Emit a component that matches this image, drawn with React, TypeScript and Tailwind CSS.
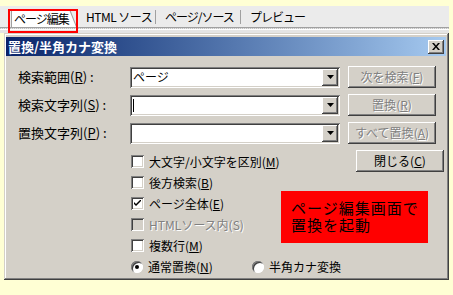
import React from 'react';

const raised =
  'shadow-[inset_-1px_-1px_0_#404040,inset_1px_1px_0_#ffffff,inset_-2px_-2px_0_#808080,inset_2px_2px_0_#d4d0c8]';
const sunken =
  'shadow-[inset_1px_1px_0_#808080,inset_-1px_-1px_0_#ffffff,inset_2px_2px_0_#404040,inset_-2px_-2px_0_#d4d0c8]';

const Accel: React.FC<{ pre: string; k: string; post?: string }> = ({ pre, k, post }) => (
  <>
    {pre}(<span className="underline underline-offset-[1px]">{k}</span>)
    {post && <span className="ml-[3px]">{post}</span>}
  </>
);

const Combo: React.FC<{ value?: string; caret?: boolean }> = ({ value, caret }) => (
  <div className={`relative flex h-[21px] w-[210px] items-center bg-white pl-[3px] ${sunken}`}>
    {caret && <div className="h-[13px] w-px bg-black" />}
    {value && <span className="text-[12px] leading-none">{value}</span>}
    <div
      className={`absolute right-[2px] top-[2px] flex h-[17px] w-[16px] items-center justify-center bg-[#d4d0c8] ${raised}`}
    >
      <svg width="7" height="4" viewBox="0 0 7 4">
        <path d="M0 0h7L3.5 4z" fill="#000" />
      </svg>
    </div>
  </div>
);

const Btn: React.FC<{ disabled?: boolean; children: React.ReactNode }> = ({ disabled, children }) => (
  <div
    className={`flex h-[22px] w-[88px] items-center justify-center bg-[#d4d0c8] text-[12px] ${raised} ${
      disabled ? 'text-[#808080] [text-shadow:1px_1px_0_#ffffff]' : 'text-black'
    }`}
  >
    {children}
  </div>
);

const Check: React.FC<{ checked?: boolean; disabled?: boolean; children: React.ReactNode }> = ({
  checked,
  disabled,
  children,
}) => (
  <div className="flex h-[21px] items-center">
    <div
      className={`flex h-[13px] w-[13px] items-center justify-center ${sunken} ${
        disabled ? 'bg-[#d4d0c8]' : 'bg-white'
      }`}
    >
      {checked && (
        <svg width="7" height="7" viewBox="0 0 7 7">
          <path d="M0 2l2 2 5-5v2l-5 5-2-2z" fill="#000" />
        </svg>
      )}
    </div>
    <span
      className={`ml-[5px] text-[12px] leading-none ${
        disabled ? 'text-[#808080] [text-shadow:1px_1px_0_#ffffff]' : 'text-black'
      }`}
    >
      {children}
    </span>
  </div>
);

const Radio: React.FC<{ checked?: boolean; children: React.ReactNode }> = ({ checked, children }) => (
  <div className="flex h-[21px] items-center">
    <div className="relative h-[12px] w-[12px] rounded-full bg-white shadow-[inset_1px_1px_0_#808080,inset_-1px_-1px_0_#ffffff,inset_2px_2px_0_#404040]">
      {checked && <div className="absolute left-[4px] top-[4px] h-[4px] w-[4px] rounded-full bg-black" />}
    </div>
    <span className="ml-[5px] text-[12px] leading-none text-black">{children}</span>
  </div>
);

export default function App() {
  return (
    <div className="relative h-[295px] w-[453px] overflow-hidden bg-[#ffffd4] font-['Noto_Sans_CJK_JP',sans-serif] text-black">
      <div className="h-[6px]" />
      {/* tab strip */}
      <div className="flex h-[22px] w-[449px] items-end border-b border-[#a0a0a0] bg-[#ebebeb] text-[12px]">
        <div className="ml-[11px] h-[17px] w-[66px] bg-[#a0a0a0] [clip-path:polygon(0_0,90%_0,100%_100%,0_100%)]">
          <div className="ml-px mt-px flex h-[16px] w-[64px] items-center bg-white pl-[2px] tracking-[-1px] [clip-path:polygon(0_0,90%_0,100%_100%,0_100%)]">
            ページ編集
          </div>
        </div>
        <div className="flex h-full items-center">
          <span className="ml-[9px] w-[62px] whitespace-nowrap tracking-[-0.5px]">HTML ソース</span>
          <div className="ml-[7px] h-[14px] w-px bg-[#a0a0a0]" />
          <span className="ml-[9px] w-[66px] whitespace-nowrap tracking-[-1px]">ページ/ソース</span>
          <div className="ml-[9px] h-[14px] w-px bg-[#a0a0a0]" />
          <span className="ml-[9px] whitespace-nowrap tracking-[-1px]">プレビュー</span>
        </div>
      </div>
      <div className="h-[5px] w-[449px] border-t border-dotted border-[#c0c0c0] bg-[#e4e4e4] shadow-[inset_0_1px_0_#ffffff]" />

      {/* dialog */}
      <div className="ml-[4px] h-[247px] w-[445px] bg-[#d4d0c8] pl-[2px] pr-[3px] pt-[4px] shadow-[inset_-1px_-1px_0_#404040,inset_1px_1px_0_#d4d0c8,inset_-2px_-2px_0_#808080,inset_2px_2px_0_#ffffff]">
        <div className="flex h-[19px] items-center justify-between bg-linear-to-r from-[#0a246a] to-[#a6caf0] pl-[2px] pr-[2px]">
          <span className="text-[13px] font-bold leading-none text-white">置換/半角カナ変換</span>
          <div className={`flex h-[14px] w-[16px] items-center justify-center bg-[#d4d0c8] ${raised}`}>
            <svg width="8" height="7" viewBox="0 0 8 7">
              <path d="M0 0h2l2 2.5L6 0h2L5 3.5 8 7H6L4 4.5 2 7H0l3-3.5z" fill="#000" />
            </svg>
          </div>
        </div>

        <div className="pl-[12px] pt-[10px]">
          <div className="flex flex-col gap-[6px]">
            <div className="flex items-center">
              <span className="w-[112px] text-[13px]">
                <Accel pre="検索範囲" k="R" post=":" />
              </span>
              <Combo value="ページ" />
              <div className="ml-[8px]">
                <Btn disabled>
                  <Accel pre="次を検索" k="F" />
                </Btn>
              </div>
            </div>
            <div className="flex items-center">
              <span className="w-[112px] text-[13px]">
                <Accel pre="検索文字列" k="S" post=":" />
              </span>
              <Combo caret />
              <div className="ml-[8px]">
                <Btn disabled>
                  <Accel pre="置換" k="R" />
                </Btn>
              </div>
            </div>
            <div className="flex items-center">
              <span className="w-[112px] text-[13px]">
                <Accel pre="置換文字列" k="P" post=":" />
              </span>
              <Combo />
              <div className="ml-[8px]">
                <Btn disabled>
                  <Accel pre="すべて置換" k="A" />
                </Btn>
              </div>
            </div>
          </div>

          <div className="mt-[6px] flex">
            <div className="ml-[113px] flex w-[217px] flex-col pt-px">
              <Check>
                <Accel pre="大文字/小文字を区別" k="M" />
              </Check>
              <Check>
                <Accel pre="後方検索" k="B" />
              </Check>
              <Check checked>
                <Accel pre="ページ全体" k="E" />
              </Check>
              <Check disabled>HTMLソース内(S)</Check>
              <Check>
                <Accel pre="複数行" k="M" />
              </Check>
              <div className="flex">
                <div className="w-[121px]">
                  <Radio checked>
                    <Accel pre="通常置換" k="N" />
                  </Radio>
                </div>
                <Radio>半角カナ変換</Radio>
              </div>
            </div>
            <div className="ml-[8px]">
              <Btn>
                <Accel pre="閉じる" k="C" />
              </Btn>
            </div>
          </div>
        </div>
      </div>

      {/* annotations */}
      <div className="absolute left-[8px] top-[9px] h-[24px] w-[70px] border-2 border-[#ff0000]" />
      <div className="absolute left-[281px] top-[191px] flex h-[52px] w-[147px] flex-col gap-px whitespace-nowrap bg-[#ff0000] pl-[10px] pt-[9px] text-[15px] tracking-[1px] text-black">
        <div className="leading-[16px]">ページ編集画面で</div>
        <div className="leading-[16px]">置換を起動</div>
      </div>
    </div>
  );
}
